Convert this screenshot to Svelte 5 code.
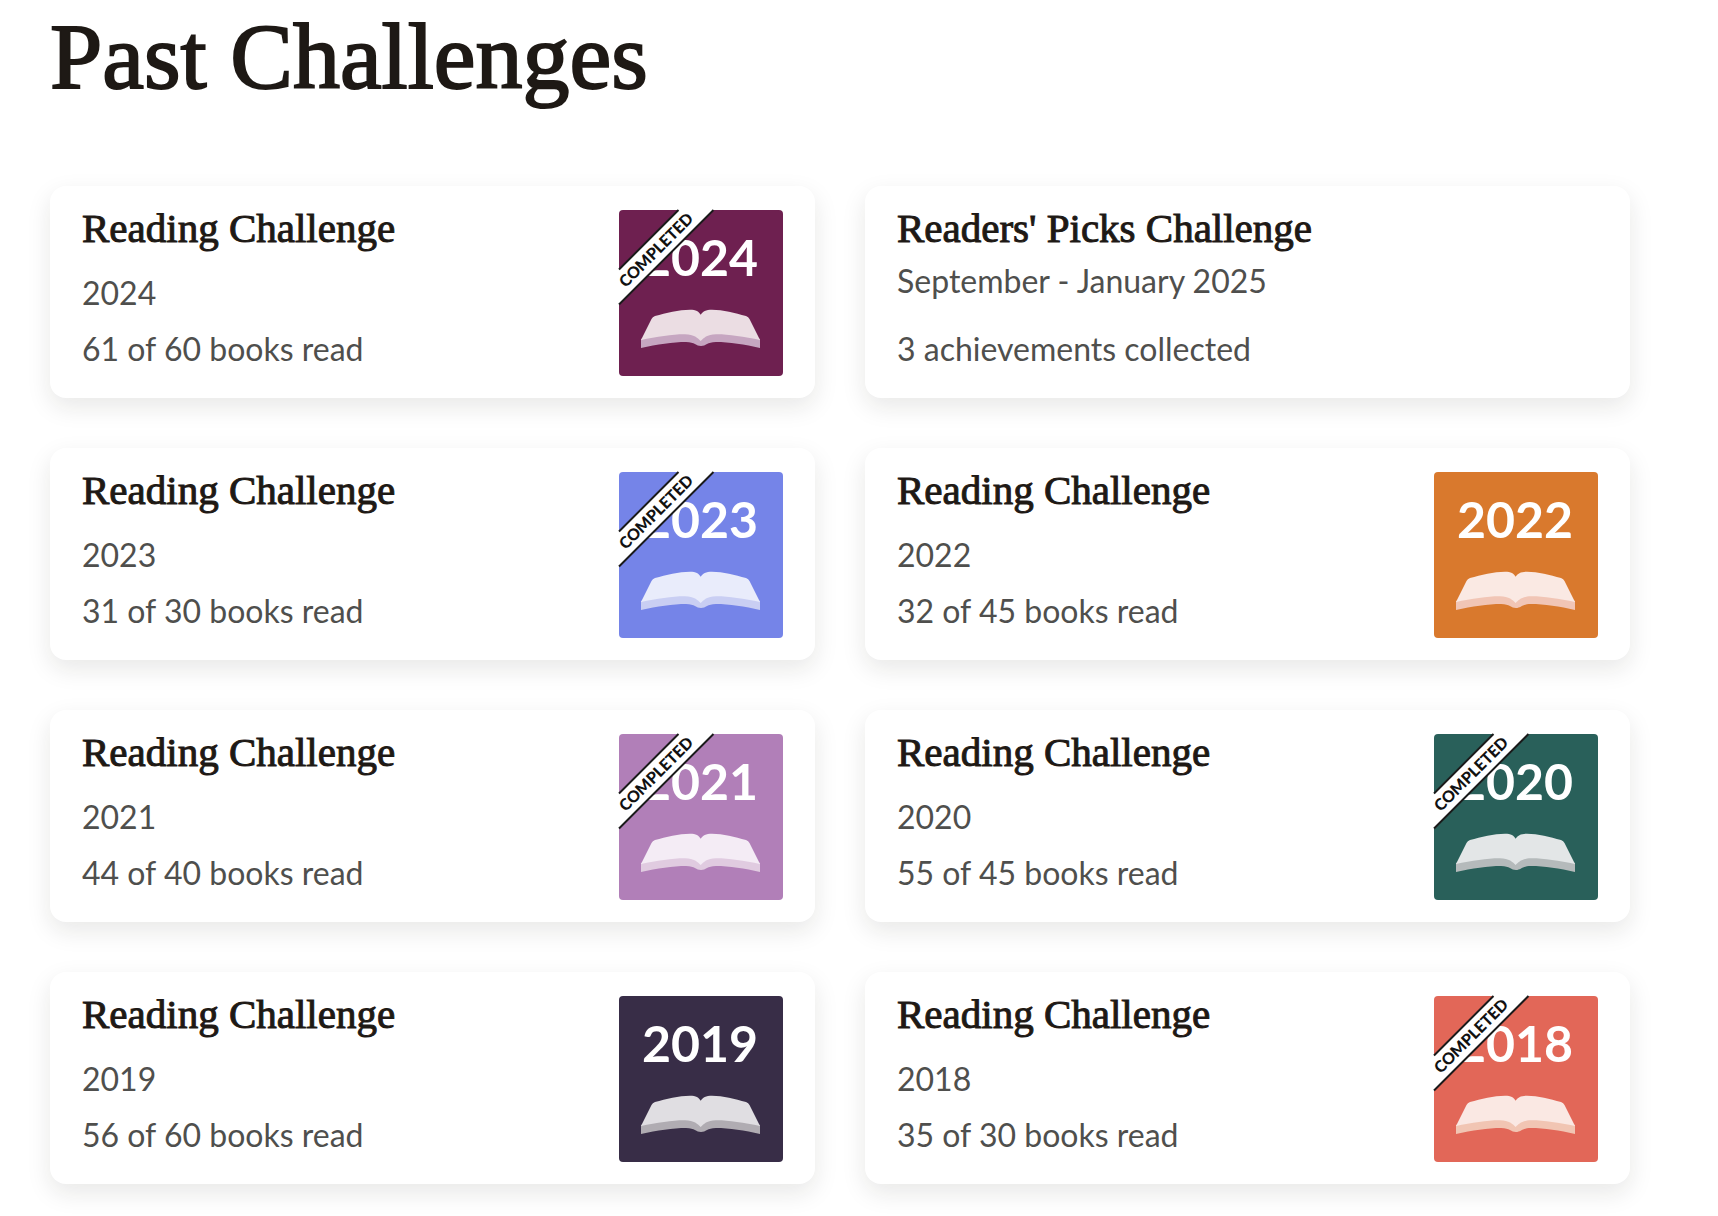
<script>
  const challenges = [
    { title: 'Reading Challenge', period: '2024', result: '61 of 60 books read', badge: { year: '2024', completed: true, tone: 'plum' } },
    { title: "Readers' Picks Challenge", period: 'September - January 2025', result: '3 achievements collected', seasonal: true },
    { title: 'Reading Challenge', period: '2023', result: '31 of 30 books read', badge: { year: '2023', completed: true, tone: 'blue' } },
    { title: 'Reading Challenge', period: '2022', result: '32 of 45 books read', badge: { year: '2022', completed: false, tone: 'orange' } },
    { title: 'Reading Challenge', period: '2021', result: '44 of 40 books read', badge: { year: '2021', completed: true, tone: 'lilac' } },
    { title: 'Reading Challenge', period: '2020', result: '55 of 45 books read', badge: { year: '2020', completed: true, tone: 'teal' } },
    { title: 'Reading Challenge', period: '2019', result: '56 of 60 books read', badge: { year: '2019', completed: false, tone: 'navy' } },
    { title: 'Reading Challenge', period: '2018', result: '35 of 30 books read', badge: { year: '2018', completed: true, tone: 'coral' } }
  ];
</script>

{#snippet yearBadge(badge)}
  <svg class="badge {badge.tone}" viewBox="0 0 164 166" role="img" aria-label="{badge.year} challenge badge">
    <rect class="cover" width="164" height="166" rx="4" />
    <text class="year" x="81" y="66" text-anchor="middle">{badge.year}</text>
    <path class="edge" d="M22 129V138C38 134.500 54 132 67 132C76 132 77 136 82 136C87 136 88 132 97 132C110 132 126 134.500 141 138V129L82 108Z" />
    <path class="pages" d="M22 130L32.500 109Q33.500 106.800 36 106C47 103 60 99.800 71 99.700C77 99.700 80 101.500 81.700 104.800C83.500 101.500 87 99.700 93 99.700C104 99.800 116 103 127 106Q129.500 106.800 130.500 109L141 130C125 126.500 108 124 97 124.200C88 124.400 84.500 128 81.700 131C79 128 75 124.400 66 124.200C55 124 38 126.500 22 130Z" />
    {#if badge.completed}
      <path class="ribbon" d="M0 59L59 0H95L0 95Z" />
      <path class="ribbon-line" d="M0 59.500L59.500 0M0 94.500L94.500 0" />
      <text class="ribbon-text" transform="translate(41 44) rotate(-45)" text-anchor="middle">COMPLETED</text>
    {/if}
  </svg>
{/snippet}

<main>
  <h1>Past Challenges</h1>
  <div class="grid">
    {#each challenges as item}
      <a class="card" href="#challenge">
        <div class="info" class:seasonal={item.seasonal}>
          <h2>{item.title}</h2>
          <p>{item.period}</p>
          <p class="result">{item.result}</p>
        </div>
        {#if item.badge}
          {@render yearBadge(item.badge)}
        {/if}
      </a>
    {/each}
  </div>
</main>

<style>
  :global(body) {
    margin: 0;
    background: #fff;
  }

  main {
    padding: 5px 88px 32px 50px;
    color: #1e1915;
  }

  h1,
  h2 {
    margin: 0;
    font-family: 'Liberation Serif', 'Times New Roman', serif;
    font-weight: 400;
  }

  h1 {
    margin-bottom: 79px;
    font-size: 94px;
    line-height: 102px;
    -webkit-text-stroke: 2px;
  }

  .grid {
    display: grid;
    grid-template-columns: repeat(2, minmax(0, 1fr));
    gap: 50px;
  }

  .card {
    display: flex;
    justify-content: space-between;
    gap: 24px;
    padding: 22px 32px;
    border-radius: 16px;
    background: #fff;
    box-shadow: 0 9px 24px rgba(30, 25, 21, 0.1);
    color: inherit;
    text-decoration: none;
  }

  .info {
    display: flex;
    flex-direction: column;
    min-height: 159px;
    padding-bottom: 9px;
  }

  h2 {
    margin-bottom: 27px;
    font-size: 41px;
    line-height: 40px;
    -webkit-text-stroke: 1px;
  }

  .seasonal h2 {
    margin-bottom: 15px;
  }

  p {
    margin: 0;
    color: #4f4f4d;
    font-family: Lato, 'Liberation Sans', sans-serif;
    font-size: 32px;
    line-height: 36px;
  }

  .result {
    margin-top: auto;
  }

  .badge {
    flex: none;
    align-self: flex-end;
    width: 164px;
    height: 166px;
    overflow: visible;
    font-family: Lato, 'Liberation Sans', sans-serif;
    font-weight: 700;
  }

  .cover { fill: var(--cover); }
  .pages { fill: var(--pages); }
  .edge { fill: var(--edge); }

  .year {
    fill: #fff;
    font-size: 50px;
  }

  .ribbon { fill: #fff; }

  .ribbon-line {
    fill: none;
    stroke: #1a1a1a;
    stroke-width: 2px;
  }

  .ribbon-text {
    fill: #111;
    font-size: 16px;
    font-weight: 900;
  }

  .plum { --cover: #6e2050; --pages: #ebdde3; --edge: #c6a6c1; }
  .blue { --cover: #7584e8; --pages: #e9ecfb; --edge: #c9cef3; }
  .orange { --cover: #d9792d; --pages: #fae9e3; --edge: #f1c5b5; }
  .lilac { --cover: #b17fb8; --pages: #f4ecf5; --edge: #e0cbe0; }
  .teal { --cover: #29605a; --pages: #e3e6e7; --edge: #b5babb; }
  .navy { --cover: #382d47; --pages: #e0dee2; --edge: #b0acb2; }
  .coral { --cover: #e26758; --pages: #fae8e3; --edge: #f1c5b3; }
</style>
